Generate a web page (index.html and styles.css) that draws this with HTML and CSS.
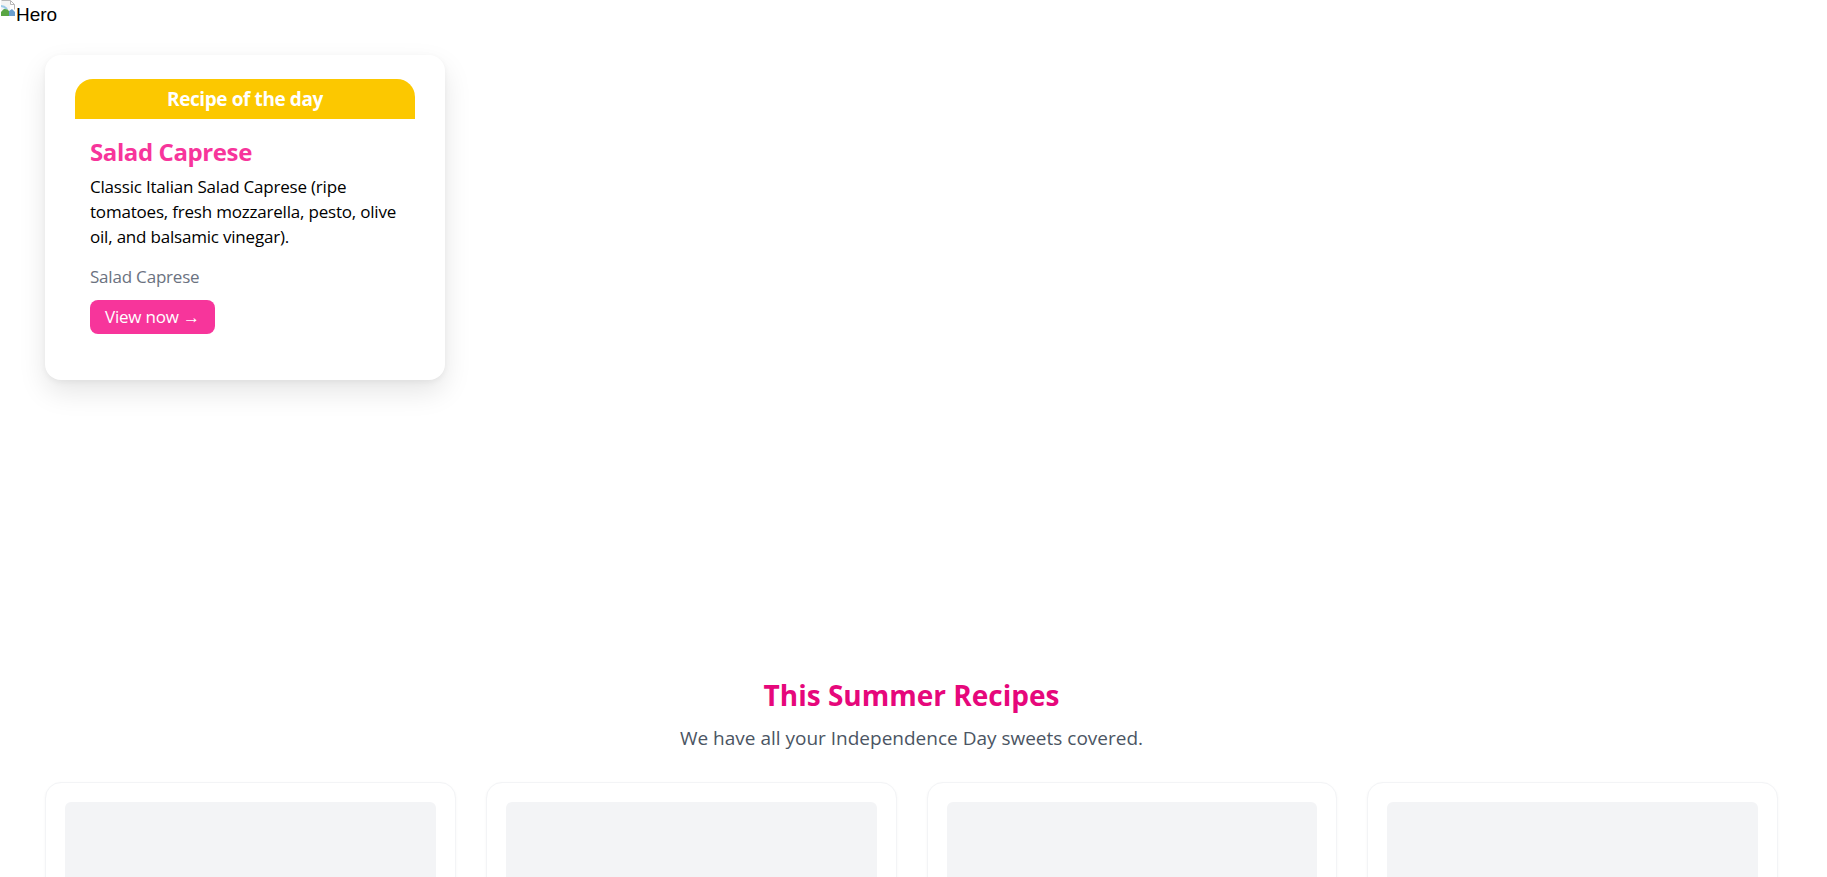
FILE: index.html
```html
<!DOCTYPE html>
<html lang="en">
<head>
<meta charset="utf-8">
<title>Recipes</title>
<link rel="stylesheet" href="styles.css">
</head>
<body>
<header class="hero">
  <div class="hero-alt">
    <svg class="broken" width="16" height="16" viewBox="0 0 16 16" aria-hidden="true">
      <path d="M1.5 0.5h9l4 4v5" fill="none" stroke="#b8b8b8"/>
      <path d="M10.5 0.5v4h4" fill="none" stroke="#b8b8b8"/>
      <rect x="1" y="1" width="9" height="9" fill="#f4f4f4"/>
      <path d="M1 12c2-3 4-4 6-3l2 2v5H1z" fill="#5aa544"/>
      <path d="M1 6c2 0 4 1 6 3" fill="none" stroke="#9ccbe8" stroke-width="2"/>
      <path d="M9 11l3-2 3 3v4H9z" fill="#6a9fcf"/>
    </svg>
    <span>Hero</span>
  </div>
  <article class="featured">
    <div class="featured-badge">Recipe of the day</div>
    <div class="featured-body">
      <h2 class="featured-title">Salad Caprese</h2>
      <p class="featured-desc">Classic Italian Salad Caprese (ripe tomatoes, fresh mozzarella, pesto, olive oil, and balsamic vinegar).</p>
      <p class="featured-meta">Salad Caprese</p>
      <a class="featured-btn" href="#">View now →</a>
    </div>
  </article>
</header>
<main class="recipes">
  <h1 class="recipes-title">This Summer Recipes</h1>
  <p class="recipes-sub">We have all your Independence Day sweets covered.</p>
  <div class="recipe-grid">
    <div class="recipe-card"><div class="recipe-thumb"></div></div>
    <div class="recipe-card"><div class="recipe-thumb"></div></div>
    <div class="recipe-card"><div class="recipe-thumb"></div></div>
    <div class="recipe-card"><div class="recipe-thumb"></div></div>
  </div>
</main>
</body>
</html>
```
FILE: styles.css
```css
* { box-sizing: border-box; }
html, body { margin: 0; padding: 0; background: #fff; }
body {
  font-family: "Open Sans", "Noto Sans", sans-serif;
  color: #000;
}
.hero {
  position: relative;
  height: 645px;
}
.hero-alt {
  display: flex;
  align-items: flex-start;
  font-family: "Liberation Sans", Arial, sans-serif;
  font-size: 19px;
  line-height: 26px;
  color: #000;
}
.broken { flex: none; }
.hero-alt span { margin-top: 2px; }
.featured {
  position: absolute;
  left: 45px;
  top: 55px;
  width: 400px;
  background: #fff;
  border-radius: 16px;
  padding: 24px 30px 46px;
  box-shadow: 0 12px 28px rgba(0,0,0,0.10), 0 2px 6px rgba(0,0,0,0.05);
}
.featured-badge {
  background: #fcc800;
  color: #fff;
  font-weight: 700;
  font-size: 19px;
  letter-spacing: -0.4px;
  line-height: 40px;
  height: 40px;
  text-align: center;
  border-radius: 18px 18px 0 0;
}
.featured-body { padding: 0 8px 0 15px; }
.featured-title {
  margin: 17px 0 0;
  font-size: 24px;
  letter-spacing: -0.4px;
  line-height: 32px;
  font-weight: 700;
  color: #f7359b;
}
.featured-desc {
  margin: 6px 0 0;
  font-size: 17px;
  letter-spacing: -0.2px;
  line-height: 25px;
}
.featured-meta {
  margin: 15px 0 0;
  font-size: 17px;
  letter-spacing: -0.2px;
  line-height: 25px;
  color: #6b7280;
}
.featured-btn {
  display: inline-block;
  margin-top: 11px;
  height: 34px;
  line-height: 34px;
  padding: 0 15px;
  border-radius: 8px;
  background: #f7359b;
  color: #fff;
  font-size: 17px;
  letter-spacing: -0.2px;
  text-decoration: none;
}
.recipes {
  padding: 30px 49px 0 45px;
  text-align: center;
}
.recipes-title {
  margin: 0;
  font-size: 28px;
  line-height: 40px;
  font-weight: 700;
  color: #e6077b;
}
.recipes-sub {
  margin: 9px 0 0;
  font-size: 19px;
  line-height: 28px;
  color: #4b5563;
}
.recipe-grid {
  margin-top: 30px;
  display: grid;
  grid-template-columns: repeat(4, 1fr);
  gap: 30px;
}
.recipe-card {
  background: #fff;
  border: 1px solid #f3f4f6;
  border-radius: 16px;
  padding: 19px;
  box-shadow: 0 1px 3px rgba(0,0,0,0.04);
}
.recipe-thumb {
  height: 260px;
  background: #f3f4f6;
  border-radius: 6px;
}
```
